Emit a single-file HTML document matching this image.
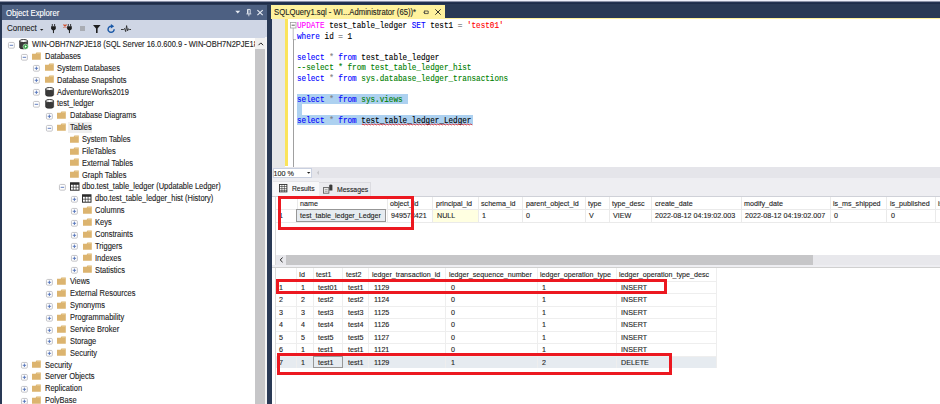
<!DOCTYPE html><html><head><meta charset="utf-8"><style>
*{margin:0;padding:0;box-sizing:border-box}
html,body{width:940px;height:404px;overflow:hidden;background:#293955;position:relative;font-family:"Liberation Sans",sans-serif}
.ab{position:absolute}
.t{position:absolute;white-space:pre;line-height:1;transform-origin:0 0;-webkit-text-stroke:0.12px currentColor}
svg{position:absolute;overflow:visible}
</style></head><body>

<div class="ab" style="left:0;top:0;width:940px;height:1px;background:#eff0fb"></div>
<div class="ab" style="left:0;top:1px;width:940px;height:1px;background:#8b91a6"></div>
<div class="ab" style="left:0;top:2px;width:940px;height:1px;background:#243352"></div>
<div class="ab" style="left:0;top:3px;width:940px;height:1px;background:#1e2c49"></div>
<div class="ab" style="left:2px;top:5px;width:265px;height:15.2px;background:#4d6082"></div>
<div class="t" style="left:5.5px;top:9px;font-size:8.5px;transform:scaleX(0.91);color:#ffffff">Object Explorer</div>
<svg style="left:235px;top:10px" width="6" height="5"><path d="M0.3 0.8 L5.2 0.8 L2.75 3.6 Z" fill="#e8ecf4"/></svg>
<svg style="left:246px;top:9.2px" width="6" height="8"><path d="M1.5 0.45 H4.2 V4.6 M1.5 0.45 V4.6" fill="none" stroke="#e8ecf4" stroke-width="0.9"/><path d="M2 0.45 V4.6" stroke="#e8ecf4" stroke-width="0.9"/><path d="M0.4 4.9 H5.3" stroke="#e8ecf4" stroke-width="0.9"/><path d="M2.85 5 V7.3" stroke="#e8ecf4" stroke-width="0.8"/></svg>
<svg style="left:256.6px;top:9.9px" width="7" height="6"><path d="M0.4 0.2 L5.7 5.2 M5.7 0.2 L0.4 5.2" stroke="#e8ecf4" stroke-width="1.15"/></svg>
<div class="ab" style="left:2px;top:20px;width:265px;height:17.6px;background:#cfd6e5"></div>
<div class="t" style="left:7.1px;top:24.2px;font-size:8.6px;transform:scaleX(0.93);color:#1e1e1e">Connect</div>
<svg style="left:39.5px;top:28.5px" width="4" height="3"><path d="M0 0 H3.4 L1.7 1.8Z" fill="#1e1e1e"/></svg>
<svg style="left:51.2px;top:23.9px" width="6" height="10"><path d="M1.3 0 V2.4 M3.6 0 V2.4" stroke="#1e1e1e" stroke-width="0.85"/><path d="M0.1 2.2 H4.8 V4.9 L3.4 6.3 H1.5 L0.1 4.9Z" fill="#1e1e1e"/><path d="M2.45 6 V9.1" stroke="#1e1e1e" stroke-width="1"/></svg>
<svg style="left:62.8px;top:23.9px" width="5" height="5"><path d="M0.5 0.5 L3.5 3.5 M3.5 0.5 L0.5 3.5" stroke="#d0502f" stroke-width="1.15"/></svg>
<svg style="left:67.4px;top:23.9px" width="6" height="10"><path d="M1.3 0 V2.4 M3.6 0 V2.4" stroke="#1e1e1e" stroke-width="0.85"/><path d="M0.1 2.2 H4.8 V4.9 L3.4 6.3 H1.5 L0.1 4.9Z" fill="#1e1e1e"/><path d="M2.45 6 V9.1" stroke="#1e1e1e" stroke-width="1"/></svg>
<div class="ab" style="left:80px;top:26px;width:5px;height:5px;background:#a9acb3"></div>
<svg style="left:93px;top:24.8px" width="8" height="9"><path d="M0 0 H7.6 L4.6 3.6 V8 H3 V3.6Z" fill="#1e1e1e"/></svg>
<svg style="left:107px;top:23.8px" width="10" height="10"><path d="M7.15 5.3 A3.05 3.05 0 1 1 4.3 2.25" fill="none" stroke="#1a58a6" stroke-width="1.45"/><path d="M3.9 0 L7.2 2.2 L3.9 4.4Z" fill="#1a58a6"/></svg>
<svg style="left:120.8px;top:24.6px" width="11" height="8"><path d="M0 4.5 H2.6 L3.6 3.4 L4.7 6.6 L5.6 0.6 L6.6 5.8 L7.5 3.8 L8.4 4.5 H10" fill="none" stroke="#2a2a2a" stroke-width="0.9"/></svg>
<div class="ab" style="left:2px;top:37.6px;width:265px;height:367px;background:#ffffff"></div>
<div class="ab" style="left:255.4px;top:37.6px;width:9.6px;height:367px;background:#c6c6c8"></div>
<div class="ab" style="left:255.4px;top:37.6px;width:9.6px;height:11.6px;background:#f0f0f0"></div>
<svg style="left:257.5px;top:41.5px" width="6" height="4"><path d="M0.5 3.2 L2.8 0.9 L5.1 3.2" fill="none" stroke="#1e1e1e" stroke-width="1"/></svg>
<div class="ab" style="left:2px;top:37px;width:253.4px;height:367px;overflow:hidden">
<svg style="margin-left:-2px;margin-top:-37px;left:8.2px;top:41.6px" width="7" height="7"><rect x="0.45" y="0.45" width="5.9" height="5.7" rx="1.1" fill="#fff" stroke="#bdbdc2" stroke-width="0.9"/><path d="M1.7 3.3 H5.1" stroke="#5070b8" stroke-width="0.9"/></svg>
<svg style="margin-left:-2px;margin-top:-37px;left:19.3px;top:38.9px" width="11" height="11"><path d="M0.6 2 V8.4 A4 1.5 0 0 0 8.6 8.4 V2Z" fill="#3a3a3a" stroke="#1e1e1e" stroke-width="0.6"/><ellipse cx="4.6" cy="2" rx="4" ry="1.5" fill="#fff" stroke="#1e1e1e" stroke-width="0.9"/><circle cx="6.6" cy="7.6" r="2.6" fill="#2a9a3a" stroke="#fff" stroke-width="0.5"/><path d="M5.8 6.3 L7.9 7.6 L5.8 8.9Z" fill="#fff"/></svg>
<div class="t" style="margin-left:-2px;margin-top:-37px;left:32.0px;top:40.0px;font-size:8.4px;transform:scaleX(0.895);color:#1e1e1e">WIN-OBH7N2PJE18 (SQL Server 16.0.600.9 - WIN-OBH7N2PJE18\Administrator)</div>
<svg style="margin-left:-2px;margin-top:-37px;left:20.8px;top:53.5px" width="7" height="7"><rect x="0.45" y="0.45" width="5.9" height="5.7" rx="1.1" fill="#fff" stroke="#bdbdc2" stroke-width="0.9"/><path d="M1.7 3.3 H5.1" stroke="#5070b8" stroke-width="0.9"/></svg>
<svg style="margin-left:-2px;margin-top:-37px;left:32.1px;top:51.6px" width="10" height="9"><path d="M0 1.8 H3.6 L4.4 0.5 H8.8 V7.7 H0Z" fill="#dcb46f"/><path d="M4.8 1.2 H8.4" stroke="#f0dcb0" stroke-width="0.6"/></svg>
<div class="t" style="margin-left:-2px;margin-top:-37px;left:44.6px;top:51.9px;font-size:8.4px;transform:scaleX(0.895);color:#1e1e1e">Databases</div>
<svg style="margin-left:-2px;margin-top:-37px;left:33.4px;top:65.3px" width="7" height="7"><rect x="0.45" y="0.45" width="5.9" height="5.7" rx="1.1" fill="#fff" stroke="#bdbdc2" stroke-width="0.9"/><path d="M1.7 3.3 H5.1" stroke="#5070b8" stroke-width="0.9"/><path d="M3.4 1.6 V5" stroke="#5070b8" stroke-width="0.9"/></svg>
<svg style="margin-left:-2px;margin-top:-37px;left:44.7px;top:63.4px" width="10" height="9"><path d="M0 1.8 H3.6 L4.4 0.5 H8.8 V7.7 H0Z" fill="#dcb46f"/><path d="M4.8 1.2 H8.4" stroke="#f0dcb0" stroke-width="0.6"/></svg>
<div class="t" style="margin-left:-2px;margin-top:-37px;left:57.2px;top:63.7px;font-size:8.4px;transform:scaleX(0.895);color:#1e1e1e">System Databases</div>
<svg style="margin-left:-2px;margin-top:-37px;left:33.4px;top:77.2px" width="7" height="7"><rect x="0.45" y="0.45" width="5.9" height="5.7" rx="1.1" fill="#fff" stroke="#bdbdc2" stroke-width="0.9"/><path d="M1.7 3.3 H5.1" stroke="#5070b8" stroke-width="0.9"/><path d="M3.4 1.6 V5" stroke="#5070b8" stroke-width="0.9"/></svg>
<svg style="margin-left:-2px;margin-top:-37px;left:44.7px;top:75.3px" width="10" height="9"><path d="M0 1.8 H3.6 L4.4 0.5 H8.8 V7.7 H0Z" fill="#dcb46f"/><path d="M4.8 1.2 H8.4" stroke="#f0dcb0" stroke-width="0.6"/></svg>
<div class="t" style="margin-left:-2px;margin-top:-37px;left:57.2px;top:75.6px;font-size:8.4px;transform:scaleX(0.895);color:#1e1e1e">Database Snapshots</div>
<svg style="margin-left:-2px;margin-top:-37px;left:33.4px;top:89.1px" width="7" height="7"><rect x="0.45" y="0.45" width="5.9" height="5.7" rx="1.1" fill="#fff" stroke="#bdbdc2" stroke-width="0.9"/><path d="M1.7 3.3 H5.1" stroke="#5070b8" stroke-width="0.9"/><path d="M3.4 1.6 V5" stroke="#5070b8" stroke-width="0.9"/></svg>
<svg style="margin-left:-2px;margin-top:-37px;left:44.5px;top:87.1px" width="10" height="10"><path d="M0.6 2 V7.8 A4 1.5 0 0 0 8.6 7.8 V2Z" fill="#3a3a3a" stroke="#1e1e1e" stroke-width="0.6"/><ellipse cx="4.6" cy="2" rx="4" ry="1.5" fill="#fff" stroke="#1e1e1e" stroke-width="0.9"/></svg>
<div class="t" style="margin-left:-2px;margin-top:-37px;left:57.2px;top:87.5px;font-size:8.4px;transform:scaleX(0.895);color:#1e1e1e">AdventureWorks2019</div>
<svg style="margin-left:-2px;margin-top:-37px;left:33.4px;top:101.0px" width="7" height="7"><rect x="0.45" y="0.45" width="5.9" height="5.7" rx="1.1" fill="#fff" stroke="#bdbdc2" stroke-width="0.9"/><path d="M1.7 3.3 H5.1" stroke="#5070b8" stroke-width="0.9"/></svg>
<svg style="margin-left:-2px;margin-top:-37px;left:44.5px;top:99.0px" width="10" height="10"><path d="M0.6 2 V7.8 A4 1.5 0 0 0 8.6 7.8 V2Z" fill="#3a3a3a" stroke="#1e1e1e" stroke-width="0.6"/><ellipse cx="4.6" cy="2" rx="4" ry="1.5" fill="#fff" stroke="#1e1e1e" stroke-width="0.9"/></svg>
<div class="t" style="margin-left:-2px;margin-top:-37px;left:57.2px;top:99.3px;font-size:8.4px;transform:scaleX(0.895);color:#1e1e1e">test_ledger</div>
<svg style="margin-left:-2px;margin-top:-37px;left:46.0px;top:112.8px" width="7" height="7"><rect x="0.45" y="0.45" width="5.9" height="5.7" rx="1.1" fill="#fff" stroke="#bdbdc2" stroke-width="0.9"/><path d="M1.7 3.3 H5.1" stroke="#5070b8" stroke-width="0.9"/><path d="M3.4 1.6 V5" stroke="#5070b8" stroke-width="0.9"/></svg>
<svg style="margin-left:-2px;margin-top:-37px;left:57.3px;top:110.9px" width="10" height="9"><path d="M0 1.8 H3.6 L4.4 0.5 H8.8 V7.7 H0Z" fill="#dcb46f"/><path d="M4.8 1.2 H8.4" stroke="#f0dcb0" stroke-width="0.6"/></svg>
<div class="t" style="margin-left:-2px;margin-top:-37px;left:69.8px;top:111.2px;font-size:8.4px;transform:scaleX(0.895);color:#1e1e1e">Database Diagrams</div>
<div class="ab" style="margin-left:-2px;margin-top:-37px;left:68.3px;top:121.8px;width:24px;height:11.2px;background:#efefef"></div>
<svg style="margin-left:-2px;margin-top:-37px;left:46.0px;top:124.7px" width="7" height="7"><rect x="0.45" y="0.45" width="5.9" height="5.7" rx="1.1" fill="#fff" stroke="#bdbdc2" stroke-width="0.9"/><path d="M1.7 3.3 H5.1" stroke="#5070b8" stroke-width="0.9"/></svg>
<svg style="margin-left:-2px;margin-top:-37px;left:57.3px;top:122.8px" width="10" height="9"><path d="M0 1.8 H3.6 L4.4 0.5 H8.8 V7.7 H0Z" fill="#dcb46f"/><path d="M4.8 1.2 H8.4" stroke="#f0dcb0" stroke-width="0.6"/></svg>
<div class="t" style="margin-left:-2px;margin-top:-37px;left:69.8px;top:123.1px;font-size:8.4px;transform:scaleX(0.895);color:#1e1e1e">Tables</div>
<svg style="margin-left:-2px;margin-top:-37px;left:69.9px;top:134.7px" width="10" height="9"><path d="M0 1.8 H3.6 L4.4 0.5 H8.8 V7.7 H0Z" fill="#dcb46f"/><path d="M4.8 1.2 H8.4" stroke="#f0dcb0" stroke-width="0.6"/></svg>
<div class="t" style="margin-left:-2px;margin-top:-37px;left:82.4px;top:135.0px;font-size:8.4px;transform:scaleX(0.895);color:#1e1e1e">System Tables</div>
<svg style="margin-left:-2px;margin-top:-37px;left:69.9px;top:146.5px" width="10" height="9"><path d="M0 1.8 H3.6 L4.4 0.5 H8.8 V7.7 H0Z" fill="#dcb46f"/><path d="M4.8 1.2 H8.4" stroke="#f0dcb0" stroke-width="0.6"/></svg>
<div class="t" style="margin-left:-2px;margin-top:-37px;left:82.4px;top:146.8px;font-size:8.4px;transform:scaleX(0.895);color:#1e1e1e">FileTables</div>
<svg style="margin-left:-2px;margin-top:-37px;left:69.9px;top:158.4px" width="10" height="9"><path d="M0 1.8 H3.6 L4.4 0.5 H8.8 V7.7 H0Z" fill="#dcb46f"/><path d="M4.8 1.2 H8.4" stroke="#f0dcb0" stroke-width="0.6"/></svg>
<div class="t" style="margin-left:-2px;margin-top:-37px;left:82.4px;top:158.7px;font-size:8.4px;transform:scaleX(0.895);color:#1e1e1e">External Tables</div>
<svg style="margin-left:-2px;margin-top:-37px;left:69.9px;top:170.3px" width="10" height="9"><path d="M0 1.8 H3.6 L4.4 0.5 H8.8 V7.7 H0Z" fill="#dcb46f"/><path d="M4.8 1.2 H8.4" stroke="#f0dcb0" stroke-width="0.6"/></svg>
<div class="t" style="margin-left:-2px;margin-top:-37px;left:82.4px;top:170.6px;font-size:8.4px;transform:scaleX(0.895);color:#1e1e1e">Graph Tables</div>
<svg style="margin-left:-2px;margin-top:-37px;left:58.6px;top:184.0px" width="7" height="7"><rect x="0.45" y="0.45" width="5.9" height="5.7" rx="1.1" fill="#fff" stroke="#bdbdc2" stroke-width="0.9"/><path d="M1.7 3.3 H5.1" stroke="#5070b8" stroke-width="0.9"/></svg>
<svg style="margin-left:-2px;margin-top:-37px;left:69.7px;top:182.1px" width="10" height="9"><rect x="0.5" y="0.8" width="8.5" height="7.4" fill="#fff" stroke="#2d2d2d" stroke-width="1"/><rect x="0.5" y="0.8" width="8.5" height="2" fill="#2d2d2d"/><path d="M3.3 1 V8 M6.1 1 V8 M0.5 5.2 H9" stroke="#2d2d2d" stroke-width="0.7"/></svg>
<div class="t" style="margin-left:-2px;margin-top:-37px;left:82.4px;top:182.4px;font-size:8.4px;transform:scaleX(0.895);color:#1e1e1e">dbo.test_table_ledger (Updatable Ledger)</div>
<svg style="margin-left:-2px;margin-top:-37px;left:71.2px;top:195.9px" width="7" height="7"><rect x="0.45" y="0.45" width="5.9" height="5.7" rx="1.1" fill="#fff" stroke="#bdbdc2" stroke-width="0.9"/><path d="M1.7 3.3 H5.1" stroke="#5070b8" stroke-width="0.9"/><path d="M3.4 1.6 V5" stroke="#5070b8" stroke-width="0.9"/></svg>
<svg style="margin-left:-2px;margin-top:-37px;left:82.3px;top:194.0px" width="10" height="9"><rect x="0.5" y="0.8" width="8.5" height="7.4" fill="#fff" stroke="#2d2d2d" stroke-width="1"/><rect x="0.5" y="0.8" width="8.5" height="2" fill="#2d2d2d"/><path d="M3.3 1 V8 M6.1 1 V8 M0.5 5.2 H9" stroke="#2d2d2d" stroke-width="0.7"/></svg>
<div class="t" style="margin-left:-2px;margin-top:-37px;left:95.0px;top:194.3px;font-size:8.4px;transform:scaleX(0.895);color:#1e1e1e">dbo.test_table_ledger_hist (History)</div>
<svg style="margin-left:-2px;margin-top:-37px;left:71.2px;top:207.8px" width="7" height="7"><rect x="0.45" y="0.45" width="5.9" height="5.7" rx="1.1" fill="#fff" stroke="#bdbdc2" stroke-width="0.9"/><path d="M1.7 3.3 H5.1" stroke="#5070b8" stroke-width="0.9"/><path d="M3.4 1.6 V5" stroke="#5070b8" stroke-width="0.9"/></svg>
<svg style="margin-left:-2px;margin-top:-37px;left:82.5px;top:205.9px" width="10" height="9"><path d="M0 1.8 H3.6 L4.4 0.5 H8.8 V7.7 H0Z" fill="#dcb46f"/><path d="M4.8 1.2 H8.4" stroke="#f0dcb0" stroke-width="0.6"/></svg>
<div class="t" style="margin-left:-2px;margin-top:-37px;left:95.0px;top:206.2px;font-size:8.4px;transform:scaleX(0.895);color:#1e1e1e">Columns</div>
<svg style="margin-left:-2px;margin-top:-37px;left:71.2px;top:219.7px" width="7" height="7"><rect x="0.45" y="0.45" width="5.9" height="5.7" rx="1.1" fill="#fff" stroke="#bdbdc2" stroke-width="0.9"/><path d="M1.7 3.3 H5.1" stroke="#5070b8" stroke-width="0.9"/><path d="M3.4 1.6 V5" stroke="#5070b8" stroke-width="0.9"/></svg>
<svg style="margin-left:-2px;margin-top:-37px;left:82.5px;top:217.8px" width="10" height="9"><path d="M0 1.8 H3.6 L4.4 0.5 H8.8 V7.7 H0Z" fill="#dcb46f"/><path d="M4.8 1.2 H8.4" stroke="#f0dcb0" stroke-width="0.6"/></svg>
<div class="t" style="margin-left:-2px;margin-top:-37px;left:95.0px;top:218.1px;font-size:8.4px;transform:scaleX(0.895);color:#1e1e1e">Keys</div>
<svg style="margin-left:-2px;margin-top:-37px;left:71.2px;top:231.5px" width="7" height="7"><rect x="0.45" y="0.45" width="5.9" height="5.7" rx="1.1" fill="#fff" stroke="#bdbdc2" stroke-width="0.9"/><path d="M1.7 3.3 H5.1" stroke="#5070b8" stroke-width="0.9"/><path d="M3.4 1.6 V5" stroke="#5070b8" stroke-width="0.9"/></svg>
<svg style="margin-left:-2px;margin-top:-37px;left:82.5px;top:229.6px" width="10" height="9"><path d="M0 1.8 H3.6 L4.4 0.5 H8.8 V7.7 H0Z" fill="#dcb46f"/><path d="M4.8 1.2 H8.4" stroke="#f0dcb0" stroke-width="0.6"/></svg>
<div class="t" style="margin-left:-2px;margin-top:-37px;left:95.0px;top:229.9px;font-size:8.4px;transform:scaleX(0.895);color:#1e1e1e">Constraints</div>
<svg style="margin-left:-2px;margin-top:-37px;left:71.2px;top:243.4px" width="7" height="7"><rect x="0.45" y="0.45" width="5.9" height="5.7" rx="1.1" fill="#fff" stroke="#bdbdc2" stroke-width="0.9"/><path d="M1.7 3.3 H5.1" stroke="#5070b8" stroke-width="0.9"/><path d="M3.4 1.6 V5" stroke="#5070b8" stroke-width="0.9"/></svg>
<svg style="margin-left:-2px;margin-top:-37px;left:82.5px;top:241.5px" width="10" height="9"><path d="M0 1.8 H3.6 L4.4 0.5 H8.8 V7.7 H0Z" fill="#dcb46f"/><path d="M4.8 1.2 H8.4" stroke="#f0dcb0" stroke-width="0.6"/></svg>
<div class="t" style="margin-left:-2px;margin-top:-37px;left:95.0px;top:241.8px;font-size:8.4px;transform:scaleX(0.895);color:#1e1e1e">Triggers</div>
<svg style="margin-left:-2px;margin-top:-37px;left:71.2px;top:255.3px" width="7" height="7"><rect x="0.45" y="0.45" width="5.9" height="5.7" rx="1.1" fill="#fff" stroke="#bdbdc2" stroke-width="0.9"/><path d="M1.7 3.3 H5.1" stroke="#5070b8" stroke-width="0.9"/><path d="M3.4 1.6 V5" stroke="#5070b8" stroke-width="0.9"/></svg>
<svg style="margin-left:-2px;margin-top:-37px;left:82.5px;top:253.4px" width="10" height="9"><path d="M0 1.8 H3.6 L4.4 0.5 H8.8 V7.7 H0Z" fill="#dcb46f"/><path d="M4.8 1.2 H8.4" stroke="#f0dcb0" stroke-width="0.6"/></svg>
<div class="t" style="margin-left:-2px;margin-top:-37px;left:95.0px;top:253.7px;font-size:8.4px;transform:scaleX(0.895);color:#1e1e1e">Indexes</div>
<svg style="margin-left:-2px;margin-top:-37px;left:71.2px;top:267.1px" width="7" height="7"><rect x="0.45" y="0.45" width="5.9" height="5.7" rx="1.1" fill="#fff" stroke="#bdbdc2" stroke-width="0.9"/><path d="M1.7 3.3 H5.1" stroke="#5070b8" stroke-width="0.9"/><path d="M3.4 1.6 V5" stroke="#5070b8" stroke-width="0.9"/></svg>
<svg style="margin-left:-2px;margin-top:-37px;left:82.5px;top:265.2px" width="10" height="9"><path d="M0 1.8 H3.6 L4.4 0.5 H8.8 V7.7 H0Z" fill="#dcb46f"/><path d="M4.8 1.2 H8.4" stroke="#f0dcb0" stroke-width="0.6"/></svg>
<div class="t" style="margin-left:-2px;margin-top:-37px;left:95.0px;top:265.5px;font-size:8.4px;transform:scaleX(0.895);color:#1e1e1e">Statistics</div>
<svg style="margin-left:-2px;margin-top:-37px;left:46.0px;top:279.0px" width="7" height="7"><rect x="0.45" y="0.45" width="5.9" height="5.7" rx="1.1" fill="#fff" stroke="#bdbdc2" stroke-width="0.9"/><path d="M1.7 3.3 H5.1" stroke="#5070b8" stroke-width="0.9"/><path d="M3.4 1.6 V5" stroke="#5070b8" stroke-width="0.9"/></svg>
<svg style="margin-left:-2px;margin-top:-37px;left:57.3px;top:277.1px" width="10" height="9"><path d="M0 1.8 H3.6 L4.4 0.5 H8.8 V7.7 H0Z" fill="#dcb46f"/><path d="M4.8 1.2 H8.4" stroke="#f0dcb0" stroke-width="0.6"/></svg>
<div class="t" style="margin-left:-2px;margin-top:-37px;left:69.8px;top:277.4px;font-size:8.4px;transform:scaleX(0.895);color:#1e1e1e">Views</div>
<svg style="margin-left:-2px;margin-top:-37px;left:46.0px;top:290.9px" width="7" height="7"><rect x="0.45" y="0.45" width="5.9" height="5.7" rx="1.1" fill="#fff" stroke="#bdbdc2" stroke-width="0.9"/><path d="M1.7 3.3 H5.1" stroke="#5070b8" stroke-width="0.9"/><path d="M3.4 1.6 V5" stroke="#5070b8" stroke-width="0.9"/></svg>
<svg style="margin-left:-2px;margin-top:-37px;left:57.3px;top:289.0px" width="10" height="9"><path d="M0 1.8 H3.6 L4.4 0.5 H8.8 V7.7 H0Z" fill="#dcb46f"/><path d="M4.8 1.2 H8.4" stroke="#f0dcb0" stroke-width="0.6"/></svg>
<div class="t" style="margin-left:-2px;margin-top:-37px;left:69.8px;top:289.3px;font-size:8.4px;transform:scaleX(0.895);color:#1e1e1e">External Resources</div>
<svg style="margin-left:-2px;margin-top:-37px;left:46.0px;top:302.7px" width="7" height="7"><rect x="0.45" y="0.45" width="5.9" height="5.7" rx="1.1" fill="#fff" stroke="#bdbdc2" stroke-width="0.9"/><path d="M1.7 3.3 H5.1" stroke="#5070b8" stroke-width="0.9"/><path d="M3.4 1.6 V5" stroke="#5070b8" stroke-width="0.9"/></svg>
<svg style="margin-left:-2px;margin-top:-37px;left:57.3px;top:300.8px" width="10" height="9"><path d="M0 1.8 H3.6 L4.4 0.5 H8.8 V7.7 H0Z" fill="#dcb46f"/><path d="M4.8 1.2 H8.4" stroke="#f0dcb0" stroke-width="0.6"/></svg>
<div class="t" style="margin-left:-2px;margin-top:-37px;left:69.8px;top:301.1px;font-size:8.4px;transform:scaleX(0.895);color:#1e1e1e">Synonyms</div>
<svg style="margin-left:-2px;margin-top:-37px;left:46.0px;top:314.6px" width="7" height="7"><rect x="0.45" y="0.45" width="5.9" height="5.7" rx="1.1" fill="#fff" stroke="#bdbdc2" stroke-width="0.9"/><path d="M1.7 3.3 H5.1" stroke="#5070b8" stroke-width="0.9"/><path d="M3.4 1.6 V5" stroke="#5070b8" stroke-width="0.9"/></svg>
<svg style="margin-left:-2px;margin-top:-37px;left:57.3px;top:312.7px" width="10" height="9"><path d="M0 1.8 H3.6 L4.4 0.5 H8.8 V7.7 H0Z" fill="#dcb46f"/><path d="M4.8 1.2 H8.4" stroke="#f0dcb0" stroke-width="0.6"/></svg>
<div class="t" style="margin-left:-2px;margin-top:-37px;left:69.8px;top:313.0px;font-size:8.4px;transform:scaleX(0.895);color:#1e1e1e">Programmability</div>
<svg style="margin-left:-2px;margin-top:-37px;left:46.0px;top:326.5px" width="7" height="7"><rect x="0.45" y="0.45" width="5.9" height="5.7" rx="1.1" fill="#fff" stroke="#bdbdc2" stroke-width="0.9"/><path d="M1.7 3.3 H5.1" stroke="#5070b8" stroke-width="0.9"/><path d="M3.4 1.6 V5" stroke="#5070b8" stroke-width="0.9"/></svg>
<svg style="margin-left:-2px;margin-top:-37px;left:57.3px;top:324.6px" width="10" height="9"><path d="M0 1.8 H3.6 L4.4 0.5 H8.8 V7.7 H0Z" fill="#dcb46f"/><path d="M4.8 1.2 H8.4" stroke="#f0dcb0" stroke-width="0.6"/></svg>
<div class="t" style="margin-left:-2px;margin-top:-37px;left:69.8px;top:324.9px;font-size:8.4px;transform:scaleX(0.895);color:#1e1e1e">Service Broker</div>
<svg style="margin-left:-2px;margin-top:-37px;left:46.0px;top:338.3px" width="7" height="7"><rect x="0.45" y="0.45" width="5.9" height="5.7" rx="1.1" fill="#fff" stroke="#bdbdc2" stroke-width="0.9"/><path d="M1.7 3.3 H5.1" stroke="#5070b8" stroke-width="0.9"/><path d="M3.4 1.6 V5" stroke="#5070b8" stroke-width="0.9"/></svg>
<svg style="margin-left:-2px;margin-top:-37px;left:57.3px;top:336.4px" width="10" height="9"><path d="M0 1.8 H3.6 L4.4 0.5 H8.8 V7.7 H0Z" fill="#dcb46f"/><path d="M4.8 1.2 H8.4" stroke="#f0dcb0" stroke-width="0.6"/></svg>
<div class="t" style="margin-left:-2px;margin-top:-37px;left:69.8px;top:336.8px;font-size:8.4px;transform:scaleX(0.895);color:#1e1e1e">Storage</div>
<svg style="margin-left:-2px;margin-top:-37px;left:46.0px;top:350.2px" width="7" height="7"><rect x="0.45" y="0.45" width="5.9" height="5.7" rx="1.1" fill="#fff" stroke="#bdbdc2" stroke-width="0.9"/><path d="M1.7 3.3 H5.1" stroke="#5070b8" stroke-width="0.9"/><path d="M3.4 1.6 V5" stroke="#5070b8" stroke-width="0.9"/></svg>
<svg style="margin-left:-2px;margin-top:-37px;left:57.3px;top:348.3px" width="10" height="9"><path d="M0 1.8 H3.6 L4.4 0.5 H8.8 V7.7 H0Z" fill="#dcb46f"/><path d="M4.8 1.2 H8.4" stroke="#f0dcb0" stroke-width="0.6"/></svg>
<div class="t" style="margin-left:-2px;margin-top:-37px;left:69.8px;top:348.6px;font-size:8.4px;transform:scaleX(0.895);color:#1e1e1e">Security</div>
<svg style="margin-left:-2px;margin-top:-37px;left:20.8px;top:362.1px" width="7" height="7"><rect x="0.45" y="0.45" width="5.9" height="5.7" rx="1.1" fill="#fff" stroke="#bdbdc2" stroke-width="0.9"/><path d="M1.7 3.3 H5.1" stroke="#5070b8" stroke-width="0.9"/><path d="M3.4 1.6 V5" stroke="#5070b8" stroke-width="0.9"/></svg>
<svg style="margin-left:-2px;margin-top:-37px;left:32.1px;top:360.2px" width="10" height="9"><path d="M0 1.8 H3.6 L4.4 0.5 H8.8 V7.7 H0Z" fill="#dcb46f"/><path d="M4.8 1.2 H8.4" stroke="#f0dcb0" stroke-width="0.6"/></svg>
<div class="t" style="margin-left:-2px;margin-top:-37px;left:44.6px;top:360.5px;font-size:8.4px;transform:scaleX(0.895);color:#1e1e1e">Security</div>
<svg style="margin-left:-2px;margin-top:-37px;left:20.8px;top:374.0px" width="7" height="7"><rect x="0.45" y="0.45" width="5.9" height="5.7" rx="1.1" fill="#fff" stroke="#bdbdc2" stroke-width="0.9"/><path d="M1.7 3.3 H5.1" stroke="#5070b8" stroke-width="0.9"/><path d="M3.4 1.6 V5" stroke="#5070b8" stroke-width="0.9"/></svg>
<svg style="margin-left:-2px;margin-top:-37px;left:32.1px;top:372.1px" width="10" height="9"><path d="M0 1.8 H3.6 L4.4 0.5 H8.8 V7.7 H0Z" fill="#dcb46f"/><path d="M4.8 1.2 H8.4" stroke="#f0dcb0" stroke-width="0.6"/></svg>
<div class="t" style="margin-left:-2px;margin-top:-37px;left:44.6px;top:372.4px;font-size:8.4px;transform:scaleX(0.895);color:#1e1e1e">Server Objects</div>
<svg style="margin-left:-2px;margin-top:-37px;left:20.8px;top:385.8px" width="7" height="7"><rect x="0.45" y="0.45" width="5.9" height="5.7" rx="1.1" fill="#fff" stroke="#bdbdc2" stroke-width="0.9"/><path d="M1.7 3.3 H5.1" stroke="#5070b8" stroke-width="0.9"/><path d="M3.4 1.6 V5" stroke="#5070b8" stroke-width="0.9"/></svg>
<svg style="margin-left:-2px;margin-top:-37px;left:32.1px;top:383.9px" width="10" height="9"><path d="M0 1.8 H3.6 L4.4 0.5 H8.8 V7.7 H0Z" fill="#dcb46f"/><path d="M4.8 1.2 H8.4" stroke="#f0dcb0" stroke-width="0.6"/></svg>
<div class="t" style="margin-left:-2px;margin-top:-37px;left:44.6px;top:384.2px;font-size:8.4px;transform:scaleX(0.895);color:#1e1e1e">Replication</div>
<svg style="margin-left:-2px;margin-top:-37px;left:20.8px;top:397.7px" width="7" height="7"><rect x="0.45" y="0.45" width="5.9" height="5.7" rx="1.1" fill="#fff" stroke="#bdbdc2" stroke-width="0.9"/><path d="M1.7 3.3 H5.1" stroke="#5070b8" stroke-width="0.9"/><path d="M3.4 1.6 V5" stroke="#5070b8" stroke-width="0.9"/></svg>
<svg style="margin-left:-2px;margin-top:-37px;left:32.1px;top:395.8px" width="10" height="9"><path d="M0 1.8 H3.6 L4.4 0.5 H8.8 V7.7 H0Z" fill="#dcb46f"/><path d="M4.8 1.2 H8.4" stroke="#f0dcb0" stroke-width="0.6"/></svg>
<div class="t" style="margin-left:-2px;margin-top:-37px;left:44.6px;top:396.1px;font-size:8.4px;transform:scaleX(0.895);color:#1e1e1e">PolyBase</div>
</div>
<div class="ab" style="left:271.3px;top:5px;width:173.7px;height:13px;background:#fff29d"></div>
<div class="ab" style="left:271.3px;top:18px;width:669px;height:1px;background:#fff29d"></div>
<div class="t" style="left:274px;top:7.6px;font-size:8.5px;transform:scaleX(0.906);color:#1e1e1e">SQLQuery1.sql - WI...Administrator (65))*</div>
<svg style="left:423px;top:9.5px" width="6" height="5"><path d="M0.3 2.3 H1.6 M1.6 0.6 V4 M1.6 1 H5.2 V3.6 H1.6" fill="none" stroke="#3a3a3a" stroke-width="0.8"/></svg>
<svg style="left:435px;top:9px" width="6" height="6"><path d="M0.3 0.3 L5.7 5.7 M5.7 0.3 L0.3 5.7" stroke="#1e1e1e" stroke-width="0.9"/></svg>
<div class="ab" style="left:272px;top:19px;width:668px;height:148px;background:#ffffff"></div>
<div class="ab" style="left:272px;top:19px;width:12.5px;height:148px;background:#e6e7e8"></div>
<div class="ab" style="left:284.5px;top:19px;width:3.5px;height:147px;background:#fbe45a"></div>
<svg style="left:289.5px;top:22px" width="8" height="20"><rect x="0.4" y="0.4" width="5.6" height="5.6" fill="#fff" stroke="#a0a0a0" stroke-width="0.8"/><path d="M1.6 3.2 H4.8" stroke="#505050" stroke-width="0.9"/><path d="M3.2 6 V17.6 H6" fill="none" stroke="#a0a0a0" stroke-width="0.7"/></svg>
<div class="ab" style="left:292.8px;top:39px;width:0.7px;height:128px;background:#a0a0a0"></div>
<div class="ab" style="left:297px;top:93.60px;width:111px;height:10.55px;background:#add1f0"></div>
<div class="ab" style="left:297px;top:104.15px;width:5px;height:10.55px;background:#add1f0"></div>
<div class="ab" style="left:297px;top:114.70px;width:176px;height:10.55px;background:#add1f0"></div>
<div class="t" style="left:297px;top:22.05px;font-family:'Liberation Mono',monospace;font-size:8.3px;transform:scaleX(0.922);color:#000"><span style="color:#ff00ff">UPDATE</span> test_table_ledger <span style="color:#0000ff">SET</span> test1 <span style="color:#808080">=</span> <span style="color:#ff0000">'test01'</span></div>
<div class="t" style="left:297px;top:32.60px;font-family:'Liberation Mono',monospace;font-size:8.3px;transform:scaleX(0.922);color:#000"><span style="color:#0000ff">where</span> id <span style="color:#808080">=</span> 1</div>
<div class="t" style="left:297px;top:53.70px;font-family:'Liberation Mono',monospace;font-size:8.3px;transform:scaleX(0.922);color:#000"><span style="color:#0000ff">select</span> <span style="color:#808080">*</span> <span style="color:#0000ff">from</span> test_table_ledger</div>
<div class="t" style="left:297px;top:64.25px;font-family:'Liberation Mono',monospace;font-size:8.3px;transform:scaleX(0.922);color:#000"><span style="color:#008000">--select * from test_table_ledger_hist</span></div>
<div class="t" style="left:297px;top:74.80px;font-family:'Liberation Mono',monospace;font-size:8.3px;transform:scaleX(0.922);color:#000"><span style="color:#0000ff">select</span> <span style="color:#808080">*</span> <span style="color:#0000ff">from</span> <span style="color:#008000">sys.database_ledger_transactions</span></div>
<div class="t" style="left:297px;top:95.90px;font-family:'Liberation Mono',monospace;font-size:8.3px;transform:scaleX(0.922);color:#000"><span style="color:#0000ff">select</span> <span style="color:#808080">*</span> <span style="color:#0000ff">from</span> <span style="color:#008000">sys.views</span></div>
<div class="t" style="left:297px;top:117.00px;font-family:'Liberation Mono',monospace;font-size:8.3px;transform:scaleX(0.922);color:#000"><span style="color:#0000ff">select</span> <span style="color:#808080">*</span> <span style="color:#0000ff">from</span> test_table_ledger_Ledger</div>
<svg style="left:362px;top:123.70px" width="112" height="2"><path d="M0 1 L0.75 0 L2.25 1 L3.75 0 L5.25 1 L6.75 0 L8.25 1 L9.75 0 L11.25 1 L12.75 0 L14.25 1 L15.75 0 L17.25 1 L18.75 0 L20.25 1 L21.75 0 L23.25 1 L24.75 0 L26.25 1 L27.75 0 L29.25 1 L30.75 0 L32.25 1 L33.75 0 L35.25 1 L36.75 0 L38.25 1 L39.75 0 L41.25 1 L42.75 0 L44.25 1 L45.75 0 L47.25 1 L48.75 0 L50.25 1 L51.75 0 L53.25 1 L54.75 0 L56.25 1 L57.75 0 L59.25 1 L60.75 0 L62.25 1 L63.75 0 L65.25 1 L66.75 0 L68.25 1 L69.75 0 L71.25 1 L72.75 0 L74.25 1 L75.75 0 L77.25 1 L78.75 0 L80.25 1 L81.75 0 L83.25 1 L84.75 0 L86.25 1 L87.75 0 L89.25 1 L90.75 0 L92.25 1 L93.75 0 L95.25 1 L96.75 0 L98.25 1 L99.75 0 L101.25 1 L102.75 0 L104.25 1 L105.75 0 L107.25 1 L108.75 0 L110.25 1" fill="none" stroke="#e02828" stroke-width="0.85"/></svg>
<div class="ab" style="left:272px;top:167px;width:668px;height:11.4px;background:#e5e5ea"></div>
<div class="ab" style="left:272.5px;top:167.8px;width:39.1px;height:10.7px;background:#fff;border:1px solid #c9d0e0"></div>
<div class="t" style="left:273.5px;top:169.5px;font-size:7.2px;color:#1e1e1e">100 %</div>
<svg style="left:306.5px;top:172px" width="4" height="3"><path d="M0 0 H3.4 L1.7 1.8Z" fill="#1e1e1e"/></svg>
<svg style="left:316px;top:170px" width="4" height="6"><path d="M3 0.5 L0.8 2.8 L3 5.1Z" fill="#c8c8cc"/></svg>
<div class="ab" style="left:272px;top:178.4px;width:668px;height:18px;background:#eeeef2"></div>
<div class="ab" style="left:272.5px;top:181.3px;width:46.6px;height:14.8px;background:#f8f8fa;border-top:1px solid #e4e4e8"></div>
<div class="ab" style="left:319.1px;top:182.4px;width:52.1px;height:13.7px;background:#ebebef;border:1px solid #dcdce1;border-bottom:none;border-left:none"></div>
<svg style="left:278.7px;top:184.3px" width="9" height="9"><rect x="0.5" y="0.5" width="7.4" height="7.4" fill="#fff" stroke="#333" stroke-width="0.9"/><path d="M0.5 2.5 H8 M0.5 4.6 H8 M0.5 6.4 H8 M2.9 0.5 V8 M5.4 0.5 V8" stroke="#333" stroke-width="0.6"/></svg>
<div class="t" style="left:292.3px;top:184.6px;font-size:7.5px;transform:scaleX(0.9);color:#1e1e1e">Results</div>
<svg style="left:323.3px;top:184.2px" width="11" height="10"><path d="M6.2 1.2 A1.6 0.7 0 0 1 9.4 1.2 V6.6 H6.2Z" fill="#3a3a3a"/><rect x="0.5" y="3.6" width="5.4" height="5.6" fill="#e8e8e8" stroke="#555" stroke-width="0.8"/><path d="M1.8 5.6 H4.6 M1.8 7.3 H4.6" stroke="#777" stroke-width="0.6"/></svg>
<div class="t" style="left:337.3px;top:185.6px;font-size:7.6px;transform:scaleX(0.9);color:#1e1e1e">Messages</div>
<div class="ab" style="left:272px;top:196.1px;width:668px;height:1px;background:#cfd1d8"></div>
<div class="ab" style="left:272px;top:197px;width:668px;height:207px;background:#ffffff"></div>
<div class="ab" style="left:274.5px;top:197px;width:1px;height:207px;background:#d9d9d9"></div>
<div class="ab" style="left:432.3px;top:209.1px;width:45.599999999999966px;height:12.5px;background:#ffffe1"></div>
<div class="ab" style="left:296.6px;top:196.6px;width:1px;height:25.0px;background:#eaeaea"></div>
<div class="ab" style="left:386.6px;top:196.6px;width:1px;height:25.0px;background:#eaeaea"></div>
<div class="ab" style="left:432.3px;top:196.6px;width:1px;height:25.0px;background:#eaeaea"></div>
<div class="ab" style="left:477.9px;top:196.6px;width:1px;height:25.0px;background:#eaeaea"></div>
<div class="ab" style="left:522.1px;top:196.6px;width:1px;height:25.0px;background:#eaeaea"></div>
<div class="ab" style="left:584.7px;top:196.6px;width:1px;height:25.0px;background:#eaeaea"></div>
<div class="ab" style="left:608.7px;top:196.6px;width:1px;height:25.0px;background:#eaeaea"></div>
<div class="ab" style="left:651.1px;top:196.6px;width:1px;height:25.0px;background:#eaeaea"></div>
<div class="ab" style="left:740.5px;top:196.6px;width:1px;height:25.0px;background:#eaeaea"></div>
<div class="ab" style="left:829.9px;top:196.6px;width:1px;height:25.0px;background:#eaeaea"></div>
<div class="ab" style="left:886.4px;top:196.6px;width:1px;height:25.0px;background:#eaeaea"></div>
<div class="ab" style="left:934.8px;top:196.6px;width:1px;height:25.0px;background:#eaeaea"></div>
<div class="ab" style="left:275.5px;top:209.1px;width:665px;height:1px;background:#eaeaea"></div>
<div class="ab" style="left:275.5px;top:221.6px;width:665px;height:1px;background:#eaeaea"></div>
<div class="ab" style="left:295.9px;top:209.1px;width:90.6px;height:12.5px;background:#e6ebf0;border:1px solid #979797"></div>
<div class="t" style="left:278.9px;top:199.6px;font-size:7.8px;transform:scaleX(0.915);color:#1e1e1e;"></div>
<div class="t" style="left:279.0px;top:212.3px;font-size:7.8px;transform:scaleX(0.915);color:#1e1e1e;">1</div>
<div class="t" style="left:300.0px;top:199.6px;font-size:7.8px;transform:scaleX(0.915);color:#1e1e1e;">name</div>
<div class="t" style="left:300.0px;top:212.3px;font-size:7.8px;transform:scaleX(0.915);color:#1e1e1e;">test_table_ledger_Ledger</div>
<div class="t" style="left:390.0px;top:199.6px;font-size:7.8px;transform:scaleX(0.915);color:#1e1e1e;">object_id</div>
<div class="t" style="left:390.9px;top:212.3px;font-size:7.8px;transform:scaleX(0.915);color:#1e1e1e;">949578421</div>
<div class="t" style="left:435.7px;top:199.6px;font-size:7.8px;transform:scaleX(0.915);color:#1e1e1e;">principal_id</div>
<div class="t" style="left:436.6px;top:212.3px;font-size:7.8px;transform:scaleX(0.915);color:#1e1e1e;">NULL</div>
<div class="t" style="left:481.3px;top:199.6px;font-size:7.8px;transform:scaleX(0.915);color:#1e1e1e;">schema_id</div>
<div class="t" style="left:482.2px;top:212.3px;font-size:7.8px;transform:scaleX(0.915);color:#1e1e1e;">1</div>
<div class="t" style="left:525.5px;top:199.6px;font-size:7.8px;transform:scaleX(0.915);color:#1e1e1e;">parent_object_id</div>
<div class="t" style="left:526.4px;top:212.3px;font-size:7.8px;transform:scaleX(0.915);color:#1e1e1e;">0</div>
<div class="t" style="left:588.1px;top:199.6px;font-size:7.8px;transform:scaleX(0.915);color:#1e1e1e;">type</div>
<div class="t" style="left:589.0px;top:212.3px;font-size:7.8px;transform:scaleX(0.915);color:#1e1e1e;">V</div>
<div class="t" style="left:612.1px;top:199.6px;font-size:7.8px;transform:scaleX(0.915);color:#1e1e1e;">type_desc</div>
<div class="t" style="left:613.0px;top:212.3px;font-size:7.8px;transform:scaleX(0.915);color:#1e1e1e;">VIEW</div>
<div class="t" style="left:654.5px;top:199.6px;font-size:7.8px;transform:scaleX(0.915);color:#1e1e1e;">create_date</div>
<div class="t" style="left:655.4px;top:212.3px;font-size:7.8px;transform:scaleX(0.915);color:#1e1e1e;">2022-08-12 04:19:02.003</div>
<div class="t" style="left:743.9px;top:199.6px;font-size:7.8px;transform:scaleX(0.915);color:#1e1e1e;">modify_date</div>
<div class="t" style="left:744.8px;top:212.3px;font-size:7.8px;transform:scaleX(0.915);color:#1e1e1e;">2022-08-12 04:19:02.007</div>
<div class="t" style="left:833.3px;top:199.6px;font-size:7.8px;transform:scaleX(0.915);color:#1e1e1e;">is_ms_shipped</div>
<div class="t" style="left:834.2px;top:212.3px;font-size:7.8px;transform:scaleX(0.915);color:#1e1e1e;">0</div>
<div class="t" style="left:889.8px;top:199.6px;font-size:7.8px;transform:scaleX(0.915);color:#1e1e1e;">is_published</div>
<div class="t" style="left:890.7px;top:212.3px;font-size:7.8px;transform:scaleX(0.915);color:#1e1e1e;">0</div>
<div class="t" style="left:938.2px;top:199.6px;font-size:7.8px;transform:scaleX(0.915);color:#1e1e1e;">is_schema_published</div>
<div class="t" style="left:939.1px;top:212.3px;font-size:7.8px;transform:scaleX(0.915);color:#1e1e1e;"></div>
<div class="ab" style="left:275.5px;top:255px;width:665px;height:9.7px;background:#e8e8ec"></div>
<div class="ab" style="left:286px;top:255px;width:527px;height:9.7px;background:#c6c6c8"></div>
<svg style="left:279px;top:257px" width="5" height="6"><path d="M3.6 0.6 L1.2 2.9 L3.6 5.2" fill="none" stroke="#1e1e1e" stroke-width="1"/></svg>
<div class="ab" style="left:272px;top:265px;width:668px;height:2.4px;background:#eeeef2"></div>
<div class="ab" style="left:272px;top:267.2px;width:668px;height:0.8px;background:#d0d0d0"></div>
<div class="ab" style="left:275.5px;top:355.5px;width:440.0px;height:12.5px;background:#e6ebf0"></div>
<div class="ab" style="left:295.6px;top:268.0px;width:1px;height:100.0px;background:#eeeeee"></div>
<div class="ab" style="left:312.6px;top:268.0px;width:1px;height:100.0px;background:#eeeeee"></div>
<div class="ab" style="left:342.4px;top:268.0px;width:1px;height:100.0px;background:#eeeeee"></div>
<div class="ab" style="left:368.1px;top:268.0px;width:1px;height:100.0px;background:#eeeeee"></div>
<div class="ab" style="left:445.2px;top:268.0px;width:1px;height:100.0px;background:#eeeeee"></div>
<div class="ab" style="left:536.5px;top:268.0px;width:1px;height:100.0px;background:#eeeeee"></div>
<div class="ab" style="left:615.5px;top:268.0px;width:1px;height:100.0px;background:#eeeeee"></div>
<div class="ab" style="left:715.5px;top:268.0px;width:1px;height:100.0px;background:#eeeeee"></div>
<div class="ab" style="left:275.5px;top:280.5px;width:441.0px;height:1px;background:#eeeeee"></div>
<div class="ab" style="left:275.5px;top:293.0px;width:441.0px;height:1px;background:#eeeeee"></div>
<div class="ab" style="left:275.5px;top:305.5px;width:441.0px;height:1px;background:#eeeeee"></div>
<div class="ab" style="left:275.5px;top:318.0px;width:441.0px;height:1px;background:#eeeeee"></div>
<div class="ab" style="left:275.5px;top:330.5px;width:441.0px;height:1px;background:#eeeeee"></div>
<div class="ab" style="left:275.5px;top:343.0px;width:441.0px;height:1px;background:#eeeeee"></div>
<div class="ab" style="left:275.5px;top:355.5px;width:441.0px;height:1px;background:#eeeeee"></div>
<div class="ab" style="left:312.6px;top:355.5px;width:30.5px;height:12.5px;background:#e6ebf0;border:1px solid #979797"></div>
<div class="t" style="left:279.1px;top:271.0px;font-size:7.8px;transform:scaleX(0.915);color:#1e1e1e;"></div>
<div class="t" style="left:279.0px;top:283.5px;font-size:7.8px;transform:scaleX(0.915);color:#1e1e1e;">1</div>
<div class="t" style="left:279.0px;top:296.0px;font-size:7.8px;transform:scaleX(0.915);color:#1e1e1e;">2</div>
<div class="t" style="left:279.0px;top:308.5px;font-size:7.8px;transform:scaleX(0.915);color:#1e1e1e;">3</div>
<div class="t" style="left:279.0px;top:321.0px;font-size:7.8px;transform:scaleX(0.915);color:#1e1e1e;">4</div>
<div class="t" style="left:279.0px;top:333.5px;font-size:7.8px;transform:scaleX(0.915);color:#1e1e1e;">5</div>
<div class="t" style="left:279.0px;top:346.0px;font-size:7.8px;transform:scaleX(0.915);color:#1e1e1e;">6</div>
<div class="t" style="left:279.0px;top:358.5px;font-size:7.8px;transform:scaleX(0.915);color:#1e1e1e;">7</div>
<div class="t" style="left:299.2px;top:271.0px;font-size:7.8px;transform:scaleX(0.915);color:#1e1e1e;">Id</div>
<div class="t" style="left:301.0px;top:283.5px;font-size:7.8px;transform:scaleX(0.915);color:#1e1e1e;">1</div>
<div class="t" style="left:301.0px;top:296.0px;font-size:7.8px;transform:scaleX(0.915);color:#1e1e1e;">2</div>
<div class="t" style="left:301.0px;top:308.5px;font-size:7.8px;transform:scaleX(0.915);color:#1e1e1e;">3</div>
<div class="t" style="left:301.0px;top:321.0px;font-size:7.8px;transform:scaleX(0.915);color:#1e1e1e;">4</div>
<div class="t" style="left:301.0px;top:333.5px;font-size:7.8px;transform:scaleX(0.915);color:#1e1e1e;">5</div>
<div class="t" style="left:301.0px;top:346.0px;font-size:7.8px;transform:scaleX(0.915);color:#1e1e1e;">1</div>
<div class="t" style="left:301.0px;top:358.5px;font-size:7.8px;transform:scaleX(0.915);color:#1e1e1e;">1</div>
<div class="t" style="left:316.2px;top:271.0px;font-size:7.8px;transform:scaleX(0.915);color:#1e1e1e;">test1</div>
<div class="t" style="left:318.0px;top:283.5px;font-size:7.8px;transform:scaleX(0.915);color:#1e1e1e;">test01</div>
<div class="t" style="left:318.0px;top:296.0px;font-size:7.8px;transform:scaleX(0.915);color:#1e1e1e;">test2</div>
<div class="t" style="left:318.0px;top:308.5px;font-size:7.8px;transform:scaleX(0.915);color:#1e1e1e;">test3</div>
<div class="t" style="left:318.0px;top:321.0px;font-size:7.8px;transform:scaleX(0.915);color:#1e1e1e;">test4</div>
<div class="t" style="left:318.0px;top:333.5px;font-size:7.8px;transform:scaleX(0.915);color:#1e1e1e;">test5</div>
<div class="t" style="left:318.0px;top:346.0px;font-size:7.8px;transform:scaleX(0.915);color:#1e1e1e;">test1</div>
<div class="t" style="left:318.0px;top:358.5px;font-size:7.8px;transform:scaleX(0.915);color:#1e1e1e;">test1</div>
<div class="t" style="left:346.0px;top:271.0px;font-size:7.8px;transform:scaleX(0.915);color:#1e1e1e;">test2</div>
<div class="t" style="left:347.8px;top:283.5px;font-size:7.8px;transform:scaleX(0.915);color:#1e1e1e;">test1</div>
<div class="t" style="left:347.8px;top:296.0px;font-size:7.8px;transform:scaleX(0.915);color:#1e1e1e;">test2</div>
<div class="t" style="left:347.8px;top:308.5px;font-size:7.8px;transform:scaleX(0.915);color:#1e1e1e;">test3</div>
<div class="t" style="left:347.8px;top:321.0px;font-size:7.8px;transform:scaleX(0.915);color:#1e1e1e;">test4</div>
<div class="t" style="left:347.8px;top:333.5px;font-size:7.8px;transform:scaleX(0.915);color:#1e1e1e;">test5</div>
<div class="t" style="left:347.8px;top:346.0px;font-size:7.8px;transform:scaleX(0.915);color:#1e1e1e;">test1</div>
<div class="t" style="left:347.8px;top:358.5px;font-size:7.8px;transform:scaleX(0.915);color:#1e1e1e;">test1</div>
<div class="t" style="left:371.7px;top:271.0px;font-size:7.8px;transform:scaleX(0.915);color:#1e1e1e;">ledger_transaction_id</div>
<div class="t" style="left:373.5px;top:283.5px;font-size:7.8px;transform:scaleX(0.915);color:#1e1e1e;">1129</div>
<div class="t" style="left:373.5px;top:296.0px;font-size:7.8px;transform:scaleX(0.915);color:#1e1e1e;">1124</div>
<div class="t" style="left:373.5px;top:308.5px;font-size:7.8px;transform:scaleX(0.915);color:#1e1e1e;">1125</div>
<div class="t" style="left:373.5px;top:321.0px;font-size:7.8px;transform:scaleX(0.915);color:#1e1e1e;">1126</div>
<div class="t" style="left:373.5px;top:333.5px;font-size:7.8px;transform:scaleX(0.915);color:#1e1e1e;">1127</div>
<div class="t" style="left:373.5px;top:346.0px;font-size:7.8px;transform:scaleX(0.915);color:#1e1e1e;">1121</div>
<div class="t" style="left:373.5px;top:358.5px;font-size:7.8px;transform:scaleX(0.915);color:#1e1e1e;">1129</div>
<div class="t" style="left:448.8px;top:271.0px;font-size:7.8px;transform:scaleX(0.915);color:#1e1e1e;">ledger_sequence_number</div>
<div class="t" style="left:450.6px;top:283.5px;font-size:7.8px;transform:scaleX(0.915);color:#1e1e1e;">0</div>
<div class="t" style="left:450.6px;top:296.0px;font-size:7.8px;transform:scaleX(0.915);color:#1e1e1e;">0</div>
<div class="t" style="left:450.6px;top:308.5px;font-size:7.8px;transform:scaleX(0.915);color:#1e1e1e;">0</div>
<div class="t" style="left:450.6px;top:321.0px;font-size:7.8px;transform:scaleX(0.915);color:#1e1e1e;">0</div>
<div class="t" style="left:450.6px;top:333.5px;font-size:7.8px;transform:scaleX(0.915);color:#1e1e1e;">0</div>
<div class="t" style="left:450.6px;top:346.0px;font-size:7.8px;transform:scaleX(0.915);color:#1e1e1e;">0</div>
<div class="t" style="left:450.6px;top:358.5px;font-size:7.8px;transform:scaleX(0.915);color:#1e1e1e;">1</div>
<div class="t" style="left:540.1px;top:271.0px;font-size:7.8px;transform:scaleX(0.915);color:#1e1e1e;">ledger_operation_type</div>
<div class="t" style="left:541.9px;top:283.5px;font-size:7.8px;transform:scaleX(0.915);color:#1e1e1e;">1</div>
<div class="t" style="left:541.9px;top:296.0px;font-size:7.8px;transform:scaleX(0.915);color:#1e1e1e;">1</div>
<div class="t" style="left:541.9px;top:308.5px;font-size:7.8px;transform:scaleX(0.915);color:#1e1e1e;">1</div>
<div class="t" style="left:541.9px;top:321.0px;font-size:7.8px;transform:scaleX(0.915);color:#1e1e1e;">1</div>
<div class="t" style="left:541.9px;top:333.5px;font-size:7.8px;transform:scaleX(0.915);color:#1e1e1e;">1</div>
<div class="t" style="left:541.9px;top:346.0px;font-size:7.8px;transform:scaleX(0.915);color:#1e1e1e;">1</div>
<div class="t" style="left:541.9px;top:358.5px;font-size:7.8px;transform:scaleX(0.915);color:#1e1e1e;">2</div>
<div class="t" style="left:619.1px;top:271.0px;font-size:7.8px;transform:scaleX(0.915);color:#1e1e1e;">ledger_operation_type_desc</div>
<div class="t" style="left:620.9px;top:283.5px;font-size:7.8px;transform:scaleX(0.915);color:#1e1e1e;">INSERT</div>
<div class="t" style="left:620.9px;top:296.0px;font-size:7.8px;transform:scaleX(0.915);color:#1e1e1e;">INSERT</div>
<div class="t" style="left:620.9px;top:308.5px;font-size:7.8px;transform:scaleX(0.915);color:#1e1e1e;">INSERT</div>
<div class="t" style="left:620.9px;top:321.0px;font-size:7.8px;transform:scaleX(0.915);color:#1e1e1e;">INSERT</div>
<div class="t" style="left:620.9px;top:333.5px;font-size:7.8px;transform:scaleX(0.915);color:#1e1e1e;">INSERT</div>
<div class="t" style="left:620.9px;top:346.0px;font-size:7.8px;transform:scaleX(0.915);color:#1e1e1e;">INSERT</div>
<div class="t" style="left:620.9px;top:358.5px;font-size:7.8px;transform:scaleX(0.915);color:#1e1e1e;">DELETE</div>
<div class="ab" style="left:277.9px;top:196px;width:136.5px;height:33.599999999999994px;border:3.2px solid #ec1820"></div>
<div class="ab" style="left:276px;top:279px;width:390.79999999999995px;height:15px;border:3.2px solid #ec1820"></div>
<div class="ab" style="left:277.1px;top:352.8px;width:394.79999999999995px;height:21.899999999999977px;border:3.2px solid #ec1820"></div>
<div class="ab" style="left:265.2px;top:37px;width:1.6px;height:367px;background:#f4f4f4"></div>
</body></html>
